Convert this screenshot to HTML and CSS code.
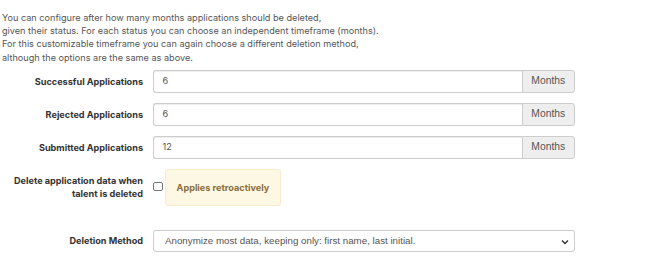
FILE: index.html
```html
<!DOCTYPE html>
<html>
<head>
<meta charset="utf-8">
<link rel="stylesheet" href="styles.css">
</head>
<body>
<p class="desc">You can configure after how many months applications should be deleted,<br>given their status. For each status you can choose an independent timeframe (months).<br>For this customizable timeframe you can again choose a different deletion method,<br>although the options are the same as above.</p>
<div class="form">
  <div class="row">
    <label class="lbl">Successful Applications</label>
    <div class="group"><div class="input">6</div><div class="addon">Months</div></div>
  </div>
  <div class="row">
    <label class="lbl">Rejected Applications</label>
    <div class="group"><div class="input">6</div><div class="addon">Months</div></div>
  </div>
  <div class="row">
    <label class="lbl">Submitted Applications</label>
    <div class="group"><div class="input">12</div><div class="addon">Months</div></div>
  </div>
  <div class="row row-check">
    <label class="lbl">Delete application data when talent is deleted</label>
    <div class="check-wrap"><span class="checkbox"></span><div class="alert">Applies retroactively</div></div>
  </div>
  <div class="row">
    <label class="lbl">Deletion Method</label>
    <div class="select"><span>Anonymize most data, keeping only: first name, last initial.</span>
      <svg class="chev" width="8" height="6" viewBox="0 0 8 6"><path d="M1 1.5 L4 4.5 L7 1.5" fill="none" stroke="#333" stroke-width="1.4"/></svg>
    </div>
  </div>
</div>
</body>
</html>
```
FILE: styles.css
```css
html, body { margin: 0; padding: 0; background: #fff; }
body { font-family: Inter, "Noto Sans", sans-serif; font-size: 9.15px; line-height: 13.4px; color: #333; }
.desc { margin: 10.6px 0 0 2px; color: #555; }
.form { margin-top: 5.8px; }
.row { display: grid; grid-template-columns: 153px 422px; margin-bottom: 10.2px; }
.lbl { text-align: right; padding: 4.7px 10px 0 0; font-weight: 700; color: #333; }
.group { display: flex; height: 22.8px; }
.input { flex: 1; border: 1px solid #ccc; border-right: 0; border-radius: 3px 0 0 3px; padding: 0 8.5px; line-height: 20.8px; color: #555; box-sizing: border-box; box-shadow: inset 0 1px 1px rgba(0,0,0,.075); }
.addon { width: 53.5px; background: #eee; border: 1px solid #ccc; border-radius: 0 3px 3px 0; box-sizing: border-box; text-align: center; line-height: 20.8px; font-family: "Liberation Sans", Arial, sans-serif; color: #555; font-size: 10.3px; }
.row-check { margin-bottom: 23.6px; }
.check-wrap { display: flex; align-items: flex-start; }
.checkbox { width: 9.6px; height: 9.6px; border: 1px solid #767676; border-radius: 2px; box-sizing: border-box; margin-top: 12.6px; margin-right: 2.6px; background: #fff; }
.alert { background: #fcf8e3; border: 1px solid #faebcc; border-radius: 3px; color: #8a6d3b; font-weight: 700; padding: 0 10px; height: 37px; width: 115.5px; box-sizing: border-box; display: flex; align-items: center; justify-content: center; white-space: nowrap; }
.select { position: relative; height: 22.8px; border: 1px solid #ccc; border-radius: 3px; box-sizing: border-box; padding: 0 11px; line-height: 20.8px; font-family: "Liberation Sans", Arial, sans-serif; font-size: 9.75px; color: #555; }
.chev { position: absolute; right: 5px; top: 8px; }
```
